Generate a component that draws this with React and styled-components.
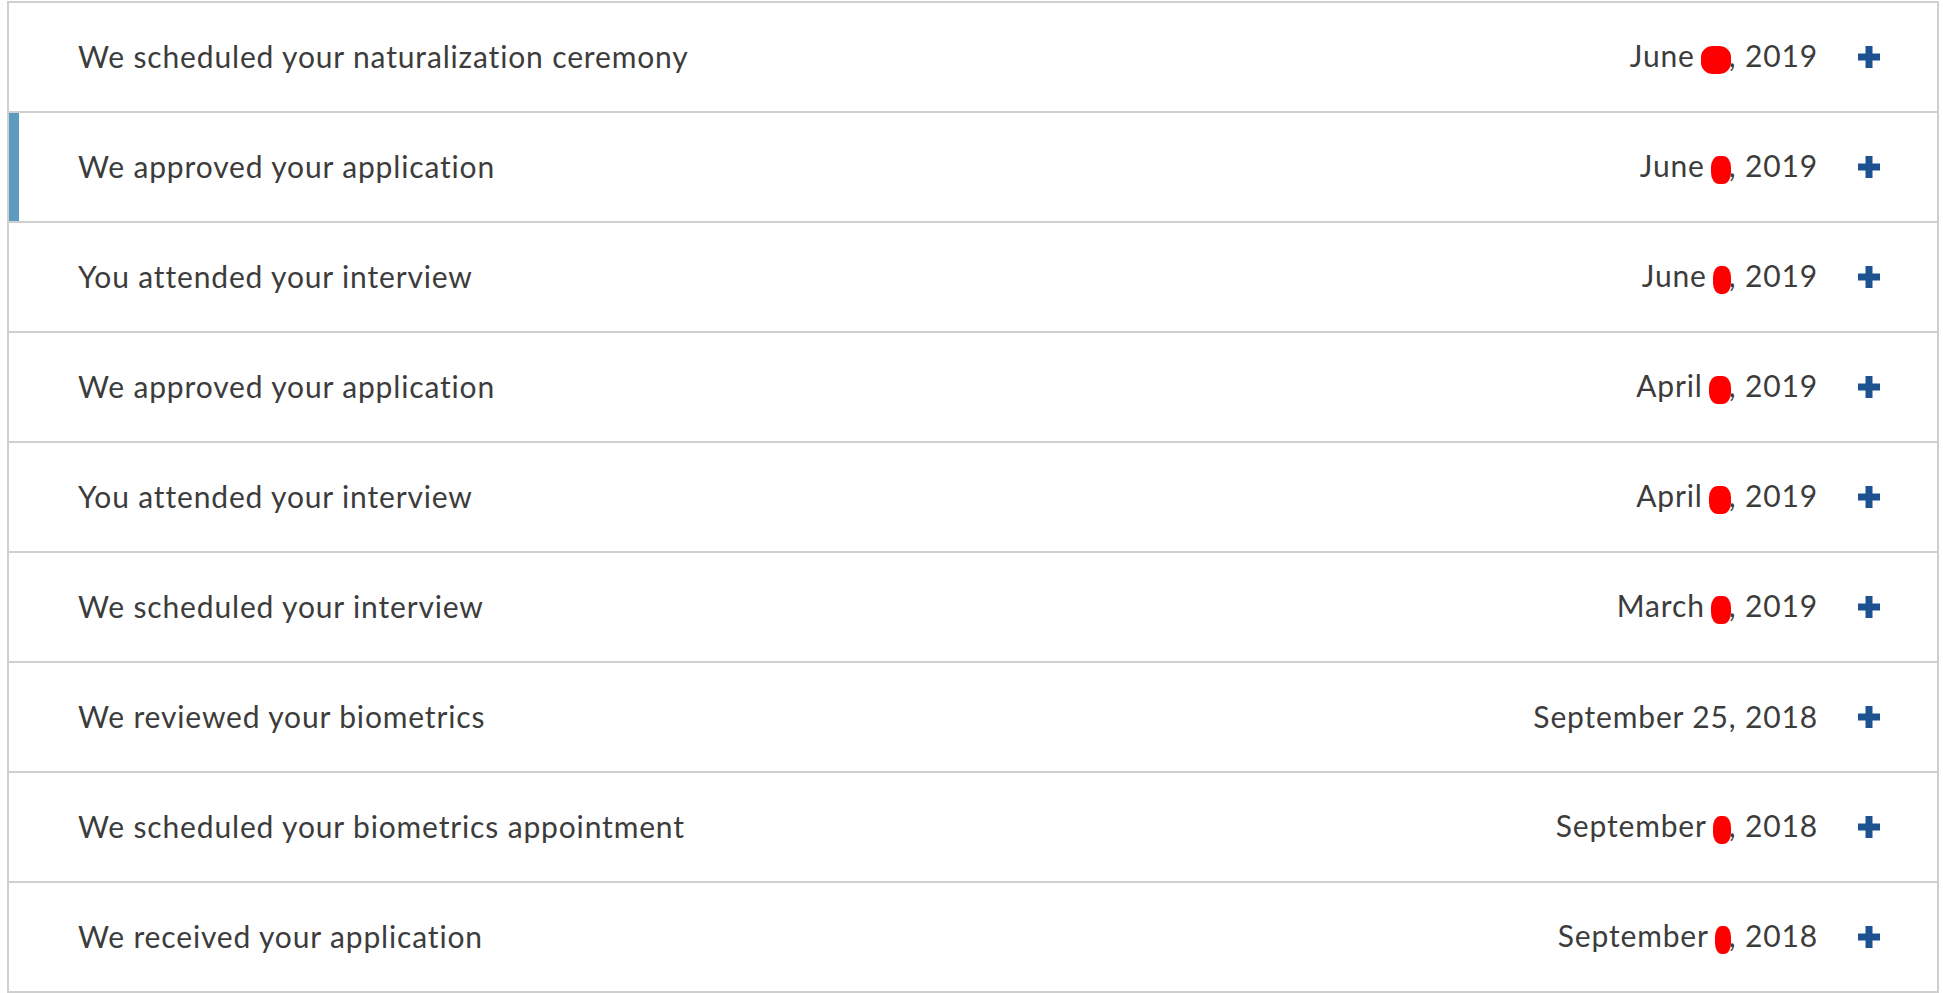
import styled, { createGlobalStyle } from "styled-components";

const GlobalStyle = createGlobalStyle`
    html, body {
        margin: 0;
        padding: 0;
        background: #fff;
    }
`;

const History = styled.div`
    margin: 1px 4px 0 7px;
    border: 2px solid #cfcfcf;
    font-family: Lato, "Open Sans", sans-serif;
    color: #3c3c3c;
`;

const Row = styled.div`
    height: 105px;
    display: flex;
    align-items: center;
    padding: 0 57px 3px 69px;
    border-top: ${props => (props.first ? "none" : "2px solid #cfcfcf")};
    box-shadow: ${props => (props.active ? "inset 10px 0 0 #5b9bc0" : "none")};
    font-size: 30px;
    letter-spacing: 0.85px;
    font-variant-ligatures: none;
`;

const Title = styled.span`
    flex: 1;
    white-space: nowrap;
`;

const DateText = styled.span`
    white-space: nowrap;
`;

const Hidden = styled.span`
    display: inline-block;
    width: ${props => props.w}px;
    height: 28px;
    vertical-align: middle;
    background: #f00;
    border-radius: 40%;
    margin: 0 -2px 0 6px;
`;

const Toggle = styled.button`
    width: 22px;
    height: 22px;
    margin: 3px 0 0 40px;
    padding: 0;
    border: none;
    background: none;
    cursor: pointer;
    display: flex;
    align-items: center;
    justify-content: center;
`;

const Plus = () => (
    <svg width="22" height="22" viewBox="0 0 22 22">
      <rect x="7.5" y="0" width="7" height="22" fill="#1d5291" />
      <rect x="0" y="7.5" width="22" height="7" fill="#1d5291" />
    </svg>
);

const events = [
    { title: "We scheduled your naturalization ceremony", month: "June", year: 2019, blot: 30 },
    { title: "We approved your application", month: "June", year: 2019, active: true, blot: 20 },
    { title: "You attended your interview", month: "June", year: 2019, blot: 18 },
    { title: "We approved your application", month: "April", year: 2019, blot: 22 },
    { title: "You attended your interview", month: "April", year: 2019, blot: 22 },
    { title: "We scheduled your interview", month: "March", year: 2019, blot: 20 },
    { title: "We reviewed your biometrics", date: "September 25, 2018" },
    { title: "We scheduled your biometrics appointment", month: "September", year: 2018, blot: 18 },
    { title: "We received your application", month: "September", year: 2018, blot: 16 },
];

export default function App() {
    return (
      <>
        <GlobalStyle />
        <History>
          {events.map((e, i) => (
            <Row key={i} first={i === 0} active={e.active}>
              <Title>{e.title}</Title>
              <DateText>
                {e.date ? e.date : (
                  <>
                    {e.month}
                    <Hidden w={e.blot} />, {e.year}
                  </>
                )}
              </DateText>
              <Toggle aria-label="Expand">
                <Plus />
              </Toggle>
            </Row>
          ))}
        </History>
      </>
    );
}
